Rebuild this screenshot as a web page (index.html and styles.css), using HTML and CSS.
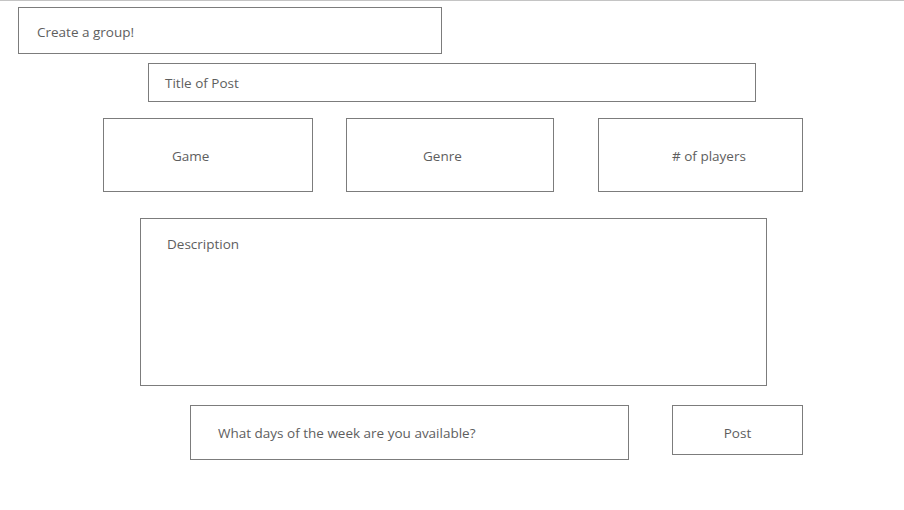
FILE: index.html
```html
<!DOCTYPE html>
<html lang="en">
<head>
<meta charset="utf-8">
<title>Create a group</title>
<link rel="stylesheet" href="styles.css">
</head>
<body>
<div class="page">
  <div class="box group-title">Create a group!</div>
  <div class="box post-title">Title of Post</div>
  <div class="meta-row">
    <div class="box meta game">Game</div>
    <div class="box meta genre">Genre</div>
    <div class="box meta players"># of players</div>
  </div>
  <div class="box description">Description</div>
  <div class="bottom-row">
    <div class="box days">What days of the week are you available?</div>
    <div class="box post-btn">Post</div>
  </div>
</div>
</body>
</html>
```
FILE: styles.css
```css
* { box-sizing: border-box; }
html, body { margin: 0; padding: 0; background: #ffffff; }
body {
  font-family: "Open Sans", "Noto Sans", sans-serif;
  font-size: 13.5px;
  color: #5e5e5e;
}
.page {
  border-top: 1px solid #c4c4c4;
  width: 904px;
  height: 510px;
  padding-top: 6px;
}
.box {
  border: 1px solid #7c7c7c;
  display: flex;
  align-items: center;
  background: #fff;
}
.group-title {
  margin-left: 18px;
  width: 424px;
  height: 47px;
  padding-left: 18px;
  padding-top: 2px;
}
.post-title {
  margin-top: 9px;
  margin-left: 148px;
  width: 608px;
  height: 39px;
  padding-left: 16px;
  padding-top: 1px;
}
.meta-row {
  display: flex;
  margin-top: 16px;
  margin-left: 103px;
  height: 74px;
}
.meta { height: 74px; padding-top: 2px; }
.game { width: 210px; padding-left: 68px; }
.genre { width: 208px; margin-left: 33px; padding-left: 76px; }
.players { width: 205px; margin-left: 44px; padding-left: 73px; }
.description {
  margin-top: 26px;
  margin-left: 140px;
  width: 627px;
  height: 168px;
  align-items: flex-start;
  padding-left: 26px;
  padding-top: 16px;
}
.bottom-row {
  display: flex;
  align-items: flex-start;
  margin-top: 19px;
  margin-left: 190px;
}
.days {
  width: 439px;
  height: 55px;
  padding-left: 27px;
}
.post-btn {
  margin-left: 43px;
  width: 131px;
  height: 50px;
  justify-content: center;
  padding-top: 6px;
}
```
